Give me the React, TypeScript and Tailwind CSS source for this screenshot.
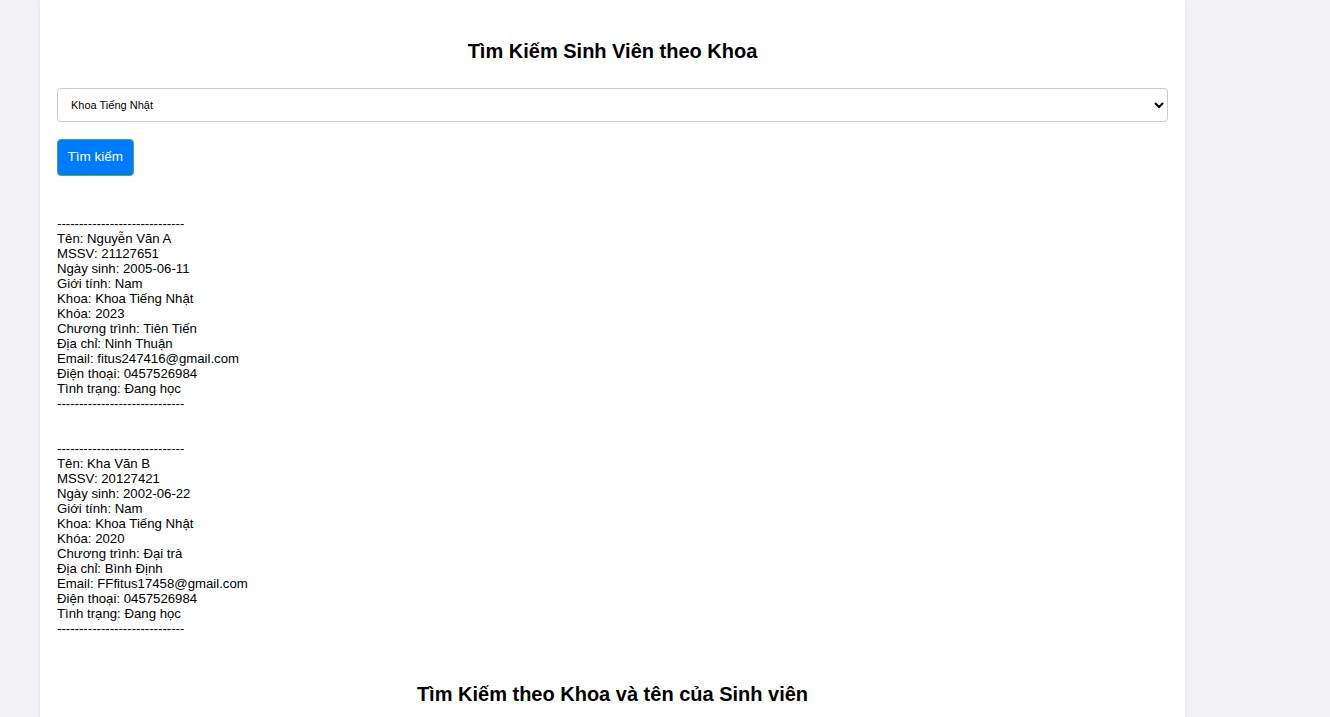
const students = [
  {
    name: 'Nguyễn Văn A',
    mssv: '21127651',
    dob: '2005-06-11',
    gender: 'Nam',
    faculty: 'Khoa Tiếng Nhật',
    year: '2023',
    program: 'Tiên Tiến',
    address: 'Ninh Thuận',
    email: 'fitus247416@gmail.com',
    phone: '0457526984',
    status: 'Đang học',
  },
  {
    name: 'Kha Văn B',
    mssv: '20127421',
    dob: '2002-06-22',
    gender: 'Nam',
    faculty: 'Khoa Tiếng Nhật',
    year: '2020',
    program: 'Đại trà',
    address: 'Bình Định',
    email: 'FFfitus17458@gmail.com',
    phone: '0457526984',
    status: 'Đang học',
  },
];

const DASHES = '-----------------------------';

export default function App() {
  return (
    <div className="min-h-screen bg-[#f2f2f7] font-['Liberation_Sans',Arial,sans-serif] text-black">
      <div className="ml-[40px] w-[1145px] bg-white px-[17px] pt-[40px] pb-10 shadow-[0_0_4px_rgba(0,0,0,0.08)]">
        <h2 className="text-center text-[20px] font-bold leading-[23px]">Tìm Kiếm Sinh Viên theo Khoa</h2>

        <select
          defaultValue="jp"
          className="mt-[25px] block h-[34px] w-full rounded-[4px] border border-[#ccc] bg-white pl-[9px] pr-2 text-[11px] text-black outline-none"
        >
          <option value="jp">Khoa Tiếng Nhật</option>
          <option value="en">Khoa Tiếng Anh</option>
          <option value="law">Khoa Luật</option>
        </select>

        <button className="mt-[17px] block h-[37px] rounded-[4px] border border-[#4caf50] bg-[#007bff] px-[9.5px] text-[13.5px] text-white">
          Tìm kiếm
        </button>

        <div className="mt-[40px] text-[13.2px] leading-[15px]">
          {students.map((s, i) => (
            <div key={s.mssv} className={i > 0 ? 'mt-[30px]' : ''}>
              <div>{DASHES}</div>
              <div>Tên: {s.name}</div>
              <div>MSSV: {s.mssv}</div>
              <div>Ngày sinh: {s.dob}</div>
              <div>Giới tính: {s.gender}</div>
              <div>Khoa: {s.faculty}</div>
              <div>Khóa: {s.year}</div>
              <div>Chương trình: {s.program}</div>
              <div>Địa chỉ: {s.address}</div>
              <div>Email: {s.email}</div>
              <div>Điện thoại: {s.phone}</div>
              <div>Tình trạng: {s.status}</div>
              <div>{DASHES}</div>
            </div>
          ))}
        </div>

        <h2 className="mt-[47px] text-center text-[20px] font-bold leading-[23px]">Tìm Kiếm theo Khoa và tên của Sinh viên</h2>
      </div>
    </div>
  );
}
